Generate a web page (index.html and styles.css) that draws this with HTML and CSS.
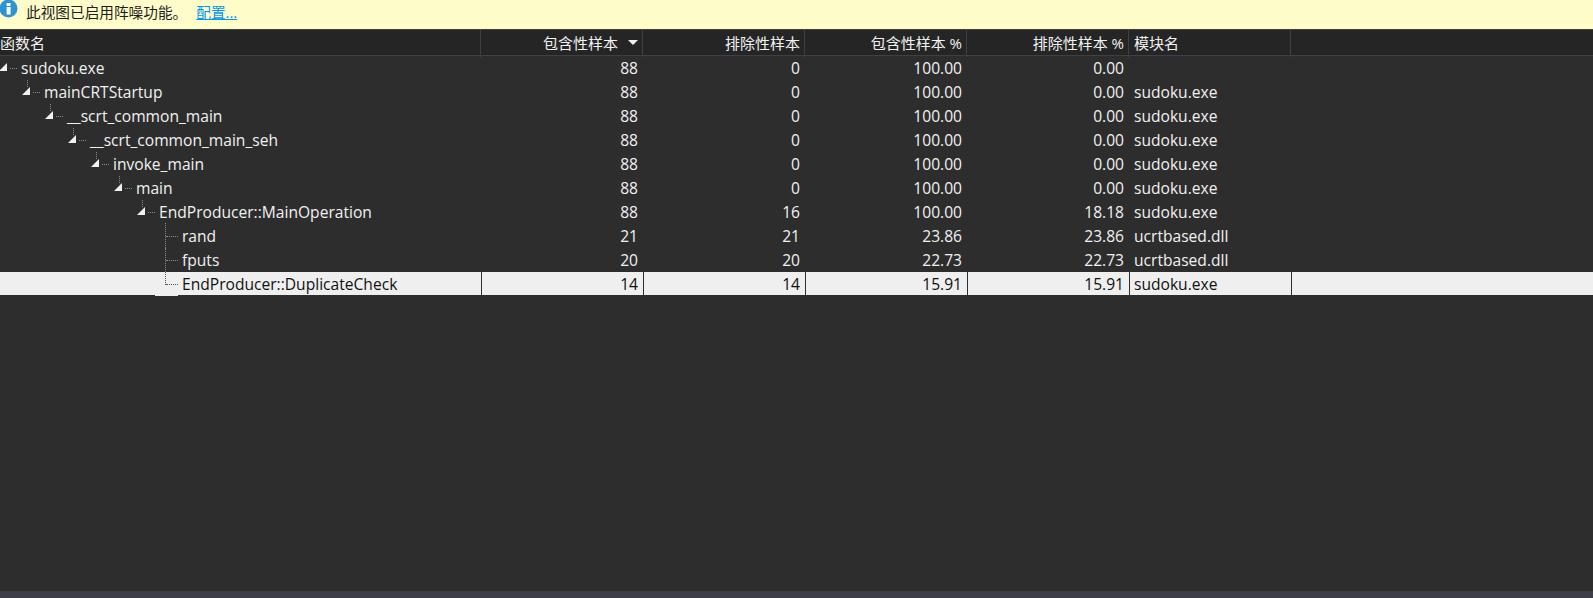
FILE: index.html
```html
<!DOCTYPE html>
<html lang="zh-CN">
<head>
<meta charset="utf-8">
<title>调用树</title>
<link rel="stylesheet" href="styles.css">
</head>
<body>
<div class="notice">
  <svg class="info" width="18" height="18" viewBox="0 0 18 18"><circle cx="8.5" cy="8.5" r="9" fill="#2e93d3"/><rect x="6.6" y="3" width="4" height="3" fill="#fff"/><rect x="6.6" y="7" width="4" height="7.5" fill="#fff"/></svg>
  <span class="notice-text">此视图已启用阵噪功能。</span>
  <a class="notice-link" href="#">配置...</a>
</div>
<div class="head">
  <div class="hcell">函数名</div>
  <div class="hcell num">包含性样本<svg class="sort" width="10" height="5" viewBox="0 0 10 5"><path d="M0 0H10L5 5Z" fill="#f1f1f1"/></svg></div>
  <div class="hcell num">排除性样本</div>
  <div class="hcell num">包含性样本 %</div>
  <div class="hcell num">排除性样本 %</div>
  <div class="hcell mod">模块名</div>
  <div class="hcell"></div>
</div>
<div class="body">
  <div class="row"><div class="cell tree d0"><i class="tog"></i><span>sudoku.exe</span></div><div class="cell num">88</div><div class="cell num">0</div><div class="cell num">100.00</div><div class="cell num">0.00</div><div class="cell mod"></div><div class="cell"></div></div>
  <div class="row"><div class="cell tree d1"><i class="tog up"></i><span>mainCRTStartup</span></div><div class="cell num">88</div><div class="cell num">0</div><div class="cell num">100.00</div><div class="cell num">0.00</div><div class="cell mod">sudoku.exe</div><div class="cell"></div></div>
  <div class="row"><div class="cell tree d2"><i class="tog up"></i><span>__scrt_common_main</span></div><div class="cell num">88</div><div class="cell num">0</div><div class="cell num">100.00</div><div class="cell num">0.00</div><div class="cell mod">sudoku.exe</div><div class="cell"></div></div>
  <div class="row"><div class="cell tree d3"><i class="tog up"></i><span>__scrt_common_main_seh</span></div><div class="cell num">88</div><div class="cell num">0</div><div class="cell num">100.00</div><div class="cell num">0.00</div><div class="cell mod">sudoku.exe</div><div class="cell"></div></div>
  <div class="row"><div class="cell tree d4"><i class="tog up"></i><span>invoke_main</span></div><div class="cell num">88</div><div class="cell num">0</div><div class="cell num">100.00</div><div class="cell num">0.00</div><div class="cell mod">sudoku.exe</div><div class="cell"></div></div>
  <div class="row"><div class="cell tree d5"><i class="tog up"></i><span>main</span></div><div class="cell num">88</div><div class="cell num">0</div><div class="cell num">100.00</div><div class="cell num">0.00</div><div class="cell mod">sudoku.exe</div><div class="cell"></div></div>
  <div class="row"><div class="cell tree d6"><i class="tog up"></i><span>EndProducer::MainOperation</span></div><div class="cell num">88</div><div class="cell num">16</div><div class="cell num">100.00</div><div class="cell num">18.18</div><div class="cell mod">sudoku.exe</div><div class="cell"></div></div>
  <div class="row"><div class="cell tree d7"><i class="leaf first"></i><span>rand</span></div><div class="cell num">21</div><div class="cell num">21</div><div class="cell num">23.86</div><div class="cell num">23.86</div><div class="cell mod">ucrtbased.dll</div><div class="cell"></div></div>
  <div class="row"><div class="cell tree d7"><i class="leaf"></i><span>fputs</span></div><div class="cell num">20</div><div class="cell num">20</div><div class="cell num">22.73</div><div class="cell num">22.73</div><div class="cell mod">ucrtbased.dll</div><div class="cell"></div></div>
  <div class="row selected"><div class="cell tree d7"><i class="leaf last"></i><span>EndProducer::DuplicateCheck</span></div><div class="cell num">14</div><div class="cell num">14</div><div class="cell num">15.91</div><div class="cell num">15.91</div><div class="cell mod">sudoku.exe</div><div class="cell"></div></div>
</div>
<div class="footer"></div>
</body>
</html>
```
FILE: styles.css
```css
* { box-sizing: border-box; }
html, body { height: 100%; }
body {
  margin: 0;
  height: 598px;
  overflow: hidden;
  display: flex;
  flex-direction: column;
  background: #2d2d2d;
  color: #f1f1f1;
  font-family: "Open Sans", "Noto Sans CJK SC", sans-serif;
  font-size: 15.6px;
}
.notice {
  height: 30px;
  flex: none;
  display: flex;
  align-items: flex-start;
  background: #fefcc8;
  color: #1e1e1e;
  border-bottom: 1px solid #3f3f46;
  overflow: hidden;
}
.info { flex: none; }
.notice-text { margin-left: 8px; line-height: 24px; font-size: 14.67px; }
.notice-link { margin-left: 9px; line-height: 24px; font-size: 14.67px; color: #0097fb; }
.head {
  display: grid;
  grid-template-columns: 481px 162px 162px 162px 162px 162px 1fr;
  height: 26px;
  flex: none;
  background: #252526;
  border-bottom: 1px solid #3f3f46;
  font-size: 15px;
}
.hcell {
  line-height: 27px;
  padding: 0 4px 0 0;
  border-right: 1px solid #3f3f46;
  white-space: nowrap;
}
.hcell:last-child { border-right: 0; }
.hcell.num { text-align: right; }
.hcell.mod { padding-left: 5px; }
.sort { margin: 0 0 5px 10px; vertical-align: middle; }
.body { flex: 1; }
.row {
  display: grid;
  grid-template-columns: 482px 162px 162px 162px 162px 162px 1fr;
  height: 24px;
}
.cell {
  line-height: 24px;
  height: 24px;
  white-space: nowrap;
  padding: 0 5px 0 0;
  border-right: 1px solid transparent;
}
.cell.num { text-align: right; }
.cell.mod { padding-left: 4px; }
.tree { display: flex; position: relative; }
.d0 { padding-left: 21px; }
.d1 { padding-left: 44px; }
.d2 { padding-left: 67px; }
.d3 { padding-left: 90px; }
.d4 { padding-left: 113px; }
.d5 { padding-left: 136px; }
.d6 { padding-left: 159px; }
.d7 { padding-left: 182px; }
.tog, .leaf { position: relative; display: block; width: 0; height: 24px; }
/* triangle glyph and dotted connector sit over the indent */
.tog::before {
  content: "";
  position: absolute;
  left: -22px;
  top: 7px;
  border-style: solid;
  border-width: 0 0 8px 8px;
  border-color: transparent transparent #f1f1f1 transparent;
}
.tog::after {
  content: "";
  position: absolute;
  left: -11px;
  top: 12px;
  width: 7px;
  border-top: 1px dotted #8a8a8a;
}
.tog + span { position: relative; }
.tog.up + span::before {
  content: "";
  position: absolute;
  left: -17px;
  top: 0;
  height: 7px;
  border-left: 1px dotted #8a8a8a;
}
.leaf::before {
  content: "";
  position: absolute;
  left: -17px;
  top: 0;
  height: 24px;
  border-left: 1px dotted #8a8a8a;
}
.leaf.first::before { top: -1px; height: 25px; }
.leaf.last::before { height: 13px; }
.leaf::after {
  content: "";
  position: absolute;
  left: -16px;
  top: 12px;
  width: 12px;
  border-top: 1px dotted #8a8a8a;
}
.selected { background: #efefef; color: #111; height: 23px; }
.selected .cell { height: 23px; border-right-color: #2d2d2d; }
.selected .cell:last-child { border-right: 0; }
.selected .tree::after {
  content: "";
  position: absolute;
  left: 155px;
  top: 23px;
  width: 23px;
  height: 1px;
  background: #efefef;
}
.selected .leaf::before, .selected .leaf::after { border-color: #555; }
.footer { height: 7px; flex: none; background: #3e3f46; }
```
